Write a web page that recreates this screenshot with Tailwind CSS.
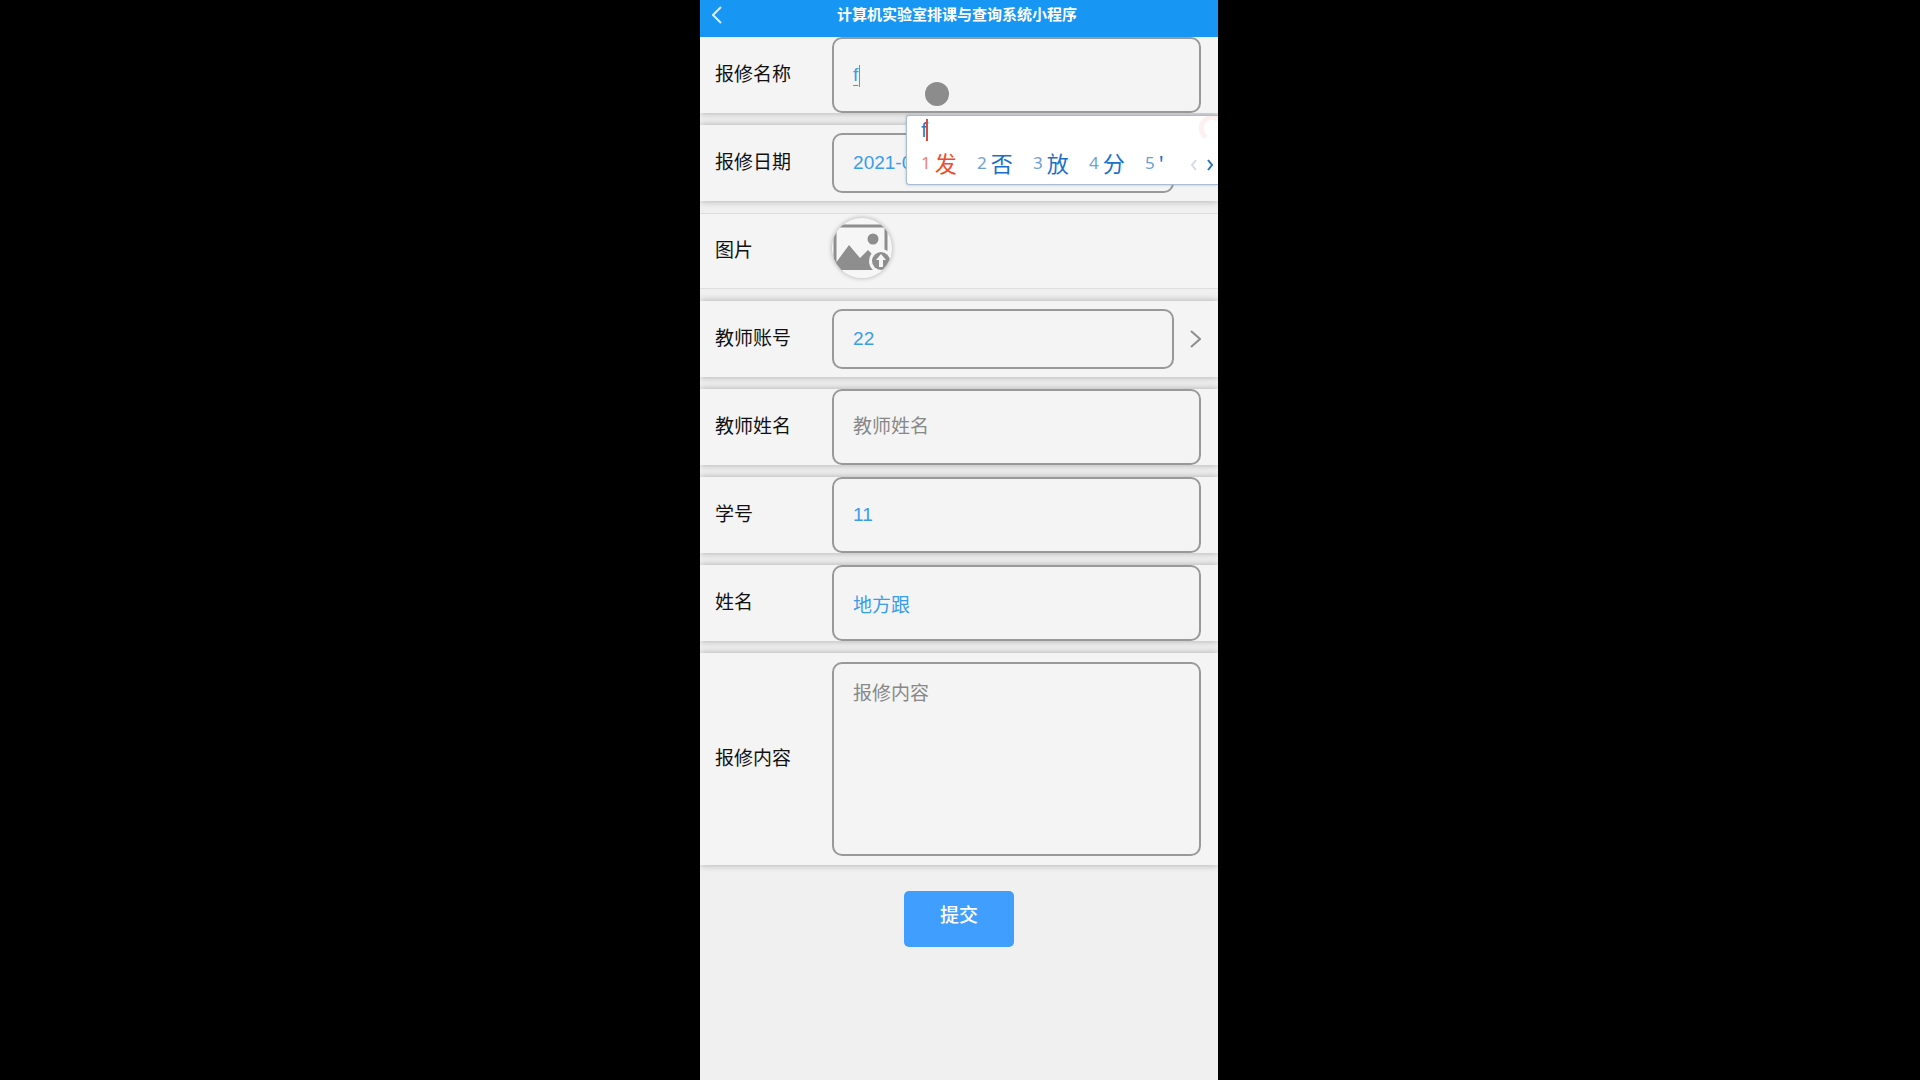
<!DOCTYPE html>
<html lang="zh-CN">
  <head>
    <meta charset="UTF-8" />
    <meta name="viewport" content="width=device-width, initial-scale=1.0" />
    <title>计算机实验室排课与查询系统小程序</title>
    <script src="https://cdn.jsdelivr.net/npm/@tailwindcss/browser@4"></script>
  </head>
  <body class="bg-black pr-0.5 font-['Liberation_Sans','Noto_Sans_CJK_SC',sans-serif]">
    <div class="relative mx-auto min-h-screen w-[27%] min-w-[360px] overflow-hidden bg-[#f0f0f0]">
      <header class="relative flex h-[37px] items-center justify-center bg-[#1896f3]">
        <button type="button" aria-label="返回" class="absolute top-1.5 left-3">
          <svg class="h-[18px] w-[10px]" viewBox="0 0 10 18" fill="none" stroke="#d8edfd" stroke-width="2">
            <path d="M9 1L1 9l8 8" />
          </svg>
        </button>
        <h1 class="pr-1 pb-2 text-[15px] leading-5 font-bold text-white">计算机实验室排课与查询系统小程序</h1>
      </header>

      <form class="flex flex-col gap-3 text-[19px] leading-7">
        <div class="flex h-[76px] items-center bg-[#f4f4f4] pr-[17px] pl-[15px] shadow-[0_0_7px_rgba(0,0,0,0.3)]">
          <label for="name" class="w-[117px] shrink-0 text-[#111]">报修名称</label>
          <div class="relative h-full min-w-0 flex-1">
            <input id="name" type="text" value="f" class="h-full w-full rounded-[10px] border-2 border-[#999] px-[19px] text-[#3a9cec] underline decoration-1 underline-offset-4 outline-none" />
            <!-- text caret -->
            <span class="absolute top-7 left-[27px] h-[22px] w-px bg-[#3a9cec]"></span>
          </div>
        </div>

        <div class="flex h-[76px] items-center bg-[#f4f4f4] pr-[17px] pl-[15px] shadow-[0_0_7px_rgba(0,0,0,0.3)]">
          <label for="date" class="w-[117px] shrink-0 text-[#111]">报修日期</label>
          <input id="date" type="text" value="2021-0" class="mr-[27px] h-[60px] min-w-0 flex-1 rounded-[10px] border-2 border-[#999] px-[19px] text-[#3a9cec] outline-none" />
        </div>

        <div class="flex h-[76px] items-center border-y border-[#dedede] bg-[#f4f4f4] pr-[17px] pl-[15px]">
          <span class="w-[117px] shrink-0 text-[#111]">图片</span>
          <button type="button" aria-label="上传图片" class="mb-1.5 size-[60px] overflow-hidden rounded-full bg-[#f6f6f6] shadow-[0_0_5px_rgba(0,0,0,0.3)]">
            <svg class="size-[60px]" viewBox="0 0 60 60">
              <rect x="3" y="8" width="51" height="43" fill="none" stroke="#8e8e8e" stroke-width="3" />
              <rect x="0" y="46" width="60" height="14" fill="#f6f6f6" />
              <circle cx="41" cy="21" r="5.500" fill="#8e8e8e" />
              <path d="M3 52V46L17 27l11 13 8-8 8 8v12z" fill="#8e8e8e" />
              <circle cx="49" cy="43" r="12" fill="#f6f6f6" />
              <circle cx="49" cy="43" r="9" fill="#8e8e8e" />
              <path d="M49 36l-5 6h3v7h4v-7h3z" fill="#f6f6f6" />
            </svg>
          </button>
        </div>

        <div class="flex h-[76px] items-center bg-[#f4f4f4] pr-[17px] pl-[15px] shadow-[0_0_7px_rgba(0,0,0,0.3)]">
          <label for="teacher-no" class="w-[117px] shrink-0 text-[#111]">教师账号</label>
          <input id="teacher-no" type="text" value="22" class="mr-4 h-[60px] min-w-0 flex-1 rounded-[10px] border-2 border-[#999] px-[19px] text-[#3a9cec] outline-none" />
          <svg class="h-[18px] w-[11px]" viewBox="0 0 11 18" fill="none" stroke="#8e8e8e" stroke-width="2">
            <path d="M1 1l9 8-9 8" />
          </svg>
        </div>

        <div class="flex h-[76px] items-center bg-[#f4f4f4] pr-[17px] pl-[15px] shadow-[0_0_7px_rgba(0,0,0,0.3)]">
          <label for="teacher-name" class="w-[117px] shrink-0 text-[#111]">教师姓名</label>
          <input id="teacher-name" type="text" placeholder="教师姓名" class="h-full min-w-0 flex-1 rounded-[10px] border-2 border-[#999] px-[19px] text-[#3a9cec] outline-none placeholder:text-[#888]" />
        </div>

        <div class="flex h-[76px] items-center bg-[#f4f4f4] pr-[17px] pl-[15px] shadow-[0_0_7px_rgba(0,0,0,0.3)]">
          <label for="student-no" class="w-[117px] shrink-0 text-[#111]">学号</label>
          <input id="student-no" type="text" value="11" class="h-full min-w-0 flex-1 rounded-[10px] border-2 border-[#999] px-[19px] text-[#3a9cec] outline-none" />
        </div>

        <div class="flex h-[76px] items-center bg-[#f4f4f4] pr-[17px] pl-[15px] shadow-[0_0_7px_rgba(0,0,0,0.3)]">
          <label for="student-name" class="w-[117px] shrink-0 text-[#111]">姓名</label>
          <input id="student-name" type="text" value="地方跟" class="h-full min-w-0 flex-1 rounded-[10px] border-2 border-[#999] px-[19px] font-['Noto_Sans_CJK_SC',sans-serif] text-[#3a9cec] outline-none" />
        </div>

        <div class="flex items-center bg-[#f4f4f4] py-[9px] pr-[17px] pl-[15px] shadow-[0_0_7px_rgba(0,0,0,0.3)]">
          <label for="content" class="w-[117px] shrink-0 text-[#111]">报修内容</label>
          <textarea id="content" placeholder="报修内容" class="h-[194px] min-w-0 flex-1 resize-none rounded-[10px] border-2 border-[#999] px-[19px] py-4 text-[#3a9cec] outline-none placeholder:text-[#888]"></textarea>
        </div>

        <button type="submit" class="mx-auto mt-3.5 h-14 w-[110px] rounded-[5px] bg-[#409eff] pb-1.5 font-medium text-white">提交</button>
      </form>

      <!-- input method candidates -->
      <div class="absolute top-[115px] right-0 left-[206px] h-[70px] overflow-hidden rounded-l-[3px] border border-r-0 border-[#a9bdd2] bg-white pl-[14px] font-['Noto_Sans','Noto_Sans_CJK_SC',sans-serif] shadow-[0_0_3px_rgba(80,110,150,0.4)]">
        <div class="flex h-7 items-center text-[19px] leading-7 text-[#2b74c8]">
          f<span class="-ml-0.5 h-[22px] w-[2px] bg-[#dc4a36]"></span>
        </div>
        <div class="flex h-[38px] items-center whitespace-nowrap text-[22px] leading-10 text-[#1b6fca]">
          <span class="flex w-14 shrink-0 items-center gap-1 text-[#f04a2a]"><span class="text-[17px] text-[#ee8070]">1</span>发</span>
          <span class="flex w-14 shrink-0 items-center gap-1"><span class="text-[17px] text-[#6f9fd6]">2</span>否</span>
          <span class="flex w-14 shrink-0 items-center gap-1"><span class="text-[17px] text-[#6f9fd6]">3</span>放</span>
          <span class="flex w-14 shrink-0 items-center gap-1"><span class="text-[17px] text-[#6f9fd6]">4</span>分</span>
          <span class="flex shrink-0 items-center gap-1"><span class="text-[17px] text-[#6f9fd6]">5</span>'</span>
          <svg class="mt-1 mr-1 ml-auto h-3 w-6 shrink-0" viewBox="0 0 24 12" fill="none" stroke-width="2">
            <path d="M6 1L2 6l4 5" stroke="#d5dbe3" />
            <path d="M18 1l4 5-4 5" stroke="#2b74b8" />
          </svg>
        </div>
        <svg class="absolute top-0 right-0 h-6 w-5" viewBox="0 0 20 24" fill="none">
          <path d="M8 21A10 10 0 0 1 20 3" stroke="#fdf1f0" stroke-width="5" />
        </svg>
      </div>

      <!-- pointer -->
      <span class="absolute top-[82px] left-[225px] size-6 rounded-full bg-[#8c8c8c]"></span>
    </div>
  </body>
</html>
